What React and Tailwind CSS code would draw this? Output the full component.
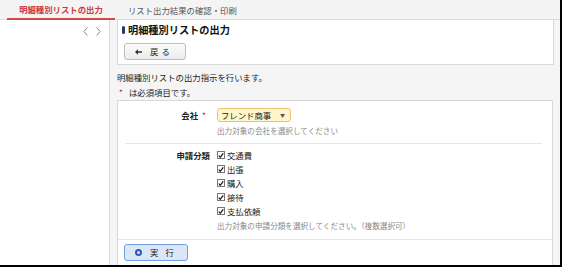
import { useState } from 'react'

const items = ['交通費', '出張', '購入', '接待', '支払依頼']

function Check({ label }) {
  return (
    <label className="flex items-center h-[14px] gap-[2px] whitespace-nowrap">
      <span className="w-[8px] h-[8px] border border-[#777] bg-white flex items-center justify-center">
        <svg width="7" height="7" viewBox="0 0 8 8">
          <path d="M1 4 L3 6.5 L7 1.2" fill="none" stroke="#111" strokeWidth="1.6" />
        </svg>
      </span>
      <span className="text-[8.4px] text-[#222] leading-[14px]">{label}</span>
    </label>
  )
}

export default function App() {
  const [company] = useState('フレンド商事')

  return (
    <div
      className="w-[562px] h-[267px] overflow-hidden flex flex-col border-r-2 border-b-2 border-black bg-white whitespace-nowrap"
      style={{ fontFamily: '"Noto Sans CJK JP", "Noto Sans", sans-serif' }}
    >
      {/* tabs */}
      <div className="h-[20px] shrink-0 flex bg-[#f4f4f4] border-b border-[#dcdcdc]">
        <div className="ml-[7px] w-[108px] h-[20px] flex items-center justify-center text-[8.4px] font-bold text-[#d03a3a] border-b-2 border-[#d24a4a]">
          明細種別リストの出力
        </div>
        <div className="ml-[13px] h-[20px] flex items-center text-[8.4px] text-[#555]">
          リスト出力結果の確認・印刷
        </div>
      </div>

      <div className="flex flex-1 min-h-0">
        {/* left panel */}
        <div className="w-[110px] shrink-0 bg-white border-r border-[#d8d8d8] flex justify-end pr-[8px] pt-[6px]">
          <div className="flex gap-[8px] h-[10px] items-center">
            <svg width="5" height="9" viewBox="0 0 5 9"><path d="M4.5 0.5 L0.8 4.5 L4.5 8.5" fill="none" stroke="#888" strokeWidth="1" /></svg>
            <svg width="5" height="9" viewBox="0 0 5 9"><path d="M0.5 0.5 L4.2 4.5 L0.5 8.5" fill="none" stroke="#888" strokeWidth="1" /></svg>
          </div>
        </div>

        {/* content */}
        <div className="flex-1 bg-[#f5f5f5] pl-[7px] pr-[6px] flex flex-col">
          <div className="bg-white border-x border-b border-[#d8d8d8] h-[45px] shrink-0 pl-[4px] pt-[5px]">
            <div className="flex items-center gap-[3px] h-[10px]">
              <span className="w-[3px] h-[8px] rounded-full bg-[#1f3a6b]" />
              <span className="text-[10.2px] font-bold text-[#111] leading-none">明細種別リストの出力</span>
            </div>
            <button className="mt-[8px] ml-[2px] w-[62px] h-[17px] rounded-[3px] border border-[#bdbdbd] bg-gradient-to-b from-[#fbfbfb] to-[#ececec] flex items-center pl-[10px] text-[8.4px] text-[#222]">
              <svg width="7" height="6" viewBox="0 0 7 6"><path d="M0 3 L3 0.3 L3 2.2 L7 2.2 L7 3.8 L3 3.8 L3 5.7 Z" fill="#333" /></svg>
              <span className="ml-[8px]">戻</span>
              <span className="ml-[3px]">る</span>
            </button>
          </div>

          <div className="text-[8.4px] text-[#222] mt-[5px] leading-[15px]">明細種別リストの出力指示を行います。</div>
          <div className="text-[8.4px] text-[#222] leading-[15px] flex">
            <span className="text-[#e02020] w-[12px] pl-[2px]">*</span>
            <span>は必須項目です。</span>
          </div>

          <div className="bg-white border border-[#d8d8d8] mr-[1px] flex-1">
            <div className="ml-[7px] mr-[10px] border-b border-[#e6e6e6] flex pt-[7px] h-[43px]">
              <div className="w-[92px] shrink-0 flex justify-end items-center h-[14px] pr-[11px]">
                <span className="text-[8.4px] font-bold text-[#222]">会社</span>
                <span className="text-[#e02020] text-[8.4px] ml-[4px]">*</span>
              </div>
              <div>
                <div className="w-[74px] h-[14px] rounded-[3px] border border-[#f0c070] bg-[#fff6cc] flex items-center justify-between pl-[3px] pr-[5px] text-[8.4px] text-[#222]">
                  <span>{company}</span>
                  <span className="text-[5px] text-[#555]">▼</span>
                </div>
                <div className="mt-[2px] text-[7.6px] text-[#888] leading-[14px]">出力対象の会社を選択してください</div>
              </div>
            </div>

            <div className="ml-[7px] flex pt-[4px] h-[95px]">
              <div className="w-[92px] shrink-0 flex justify-end h-[14px] items-center pr-[7px]">
                <span className="text-[8.4px] font-bold text-[#222]">申請分類</span>
              </div>
              <div>
                {items.map((it) => (
                  <Check key={it} label={it} />
                ))}
                <div className="mt-[1px] text-[7.6px] text-[#888] leading-[14px]">出力対象の申請分類を選択してください。（複数選択可）</div>
              </div>
            </div>

            <div className="border-t border-[#e6e6e6] px-[6px] pt-[4px] h-[30px]">
              <button className="w-[64px] h-[17px] rounded-[3px] border border-[#6f9fe0] bg-[#dbe6f7] flex items-center pl-[10px] text-[8.4px] text-[#222]">
                <span className="w-[7px] h-[7px] rounded-full border-2 border-[#2d5aa8]" />
                <span className="ml-[8px]">実</span>
                <span className="ml-[7px]">行</span>
              </button>
            </div>
          </div>
        </div>
      </div>
    </div>
  )
}
